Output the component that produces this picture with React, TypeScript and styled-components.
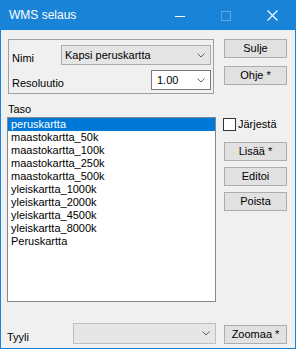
import * as React from 'react';
import styled, { createGlobalStyle } from 'styled-components';

const GlobalStyle = createGlobalStyle`
  html, body {
    margin: 0;
    padding: 0;
    background: #ffffff;
  }
  * {
    box-sizing: border-box;
  }
`;

const Window = styled.div`
  width: 296px;
  height: 349px;
  display: flex;
  flex-direction: column;
  background: #f0f0f0;
  border: 1px solid #1883d7;
  font-family: "Liberation Sans", Arial, sans-serif;
  font-size: 11px;
  color: #000;
`;

const TitleBar = styled.div`
  height: 29px;
  display: flex;
  align-items: center;
  background: #1883d7;
  color: #fff;
`;

const Title = styled.div`
  flex: 1;
  padding-left: 8px;
  font-size: 12px;
  padding-bottom: 1px;
`;

const CaptionButton = styled.div`
  width: 46px;
  height: 29px;
  display: flex;
  align-items: center;
  justify-content: center;
`;

const Body = styled.div`
  flex: 1;
  display: grid;
  grid-template-columns: 209px 63px;
  grid-template-rows: 55px 23px 185px 1fr;
  column-gap: 8px;
  padding: 9px 8px 0 6px;
`;

const Group = styled.div`
  margin-left: 1px;
  width: 206px;
  border: 1px solid #a0a0a0;
  display: flex;
  flex-direction: column;
  gap: 5px;
  padding: 5px 2px 0 3px;
`;

const FieldRow = styled.div`
  display: flex;
  justify-content: space-between;
  align-items: flex-start;
`;

const FieldLabel = styled.span<{ $drop?: number }>`
  padding-top: ${(p) => p.$drop ?? 5}px;
  line-height: 13px;
`;

const Combo = styled.div<{ $width: number; $editable?: boolean; $disabled?: boolean; $height?: number }>`
  width: ${(p) => p.$width}px;
  height: ${(p) => p.$height ?? 20}px;
  display: flex;
  align-items: center;
  justify-content: space-between;
  padding: 0 5px 0 ${(p) => (p.$editable ? 5 : 3)}px;
  background: ${(p) => (p.$editable ? '#ffffff' : p.$disabled ? '#e6e6e6' : '#e5e5e5')};
  border: 1px solid ${(p) => (p.$editable ? '#7a7a7a' : p.$disabled ? '#bfbfbf' : '#acacac')};
  line-height: 13px;
`;

const ButtonColumn = styled.div<{ $gap: number }>`
  display: flex;
  flex-direction: column;
  gap: ${(p) => p.$gap}px;
`;

const Button = styled.div`
  width: 63px;
  height: 19px;
  display: flex;
  align-items: center;
  justify-content: center;
  background: #e1e1e1;
  border: 1px solid #adadad;
  line-height: 13px;
`;

const SectionLabel = styled.div`
  grid-column: 1 / span 2;
  padding: 9px 0 0 1px;
  line-height: 13px;
`;

const ListBox = styled.div`
  background: #fff;
  border: 1px solid #828790;
  display: flex;
  flex-direction: column;
  overflow: hidden;
`;

const ListItem = styled.div<{ $selected?: boolean }>`
  height: 13px;
  line-height: 13px;
  padding-left: 3px;
  white-space: nowrap;
  background: ${(p) => (p.$selected ? '#0078d7' : 'transparent')};
  color: ${(p) => (p.$selected ? '#fff' : '#000')};
`;

const CheckRow = styled.label`
  display: flex;
  align-items: center;
  gap: 2px;
  height: 13px;
  margin: 1px 0 5px -1px;
  line-height: 13px;
`;

const CheckBox = styled.span`
  width: 13px;
  height: 13px;
  background: #fff;
  border: 1px solid #333;
`;

const BottomRow = styled.div`
  display: flex;
  align-items: flex-start;
  justify-content: space-between;
  padding-top: 21px;
`;

const BottomRight = styled.div`
  padding-top: 23px;
`;

const Chevron = () => (
  <svg width="8" height="5" viewBox="0 0 8 5">
    <polyline points="0.5,0.5 4,4 7.5,0.5" fill="none" stroke="#606060" strokeWidth="1" />
  </svg>
);

const items = [
  'peruskartta',
  'maastokartta_50k',
  'maastokartta_100k',
  'maastokartta_250k',
  'maastokartta_500k',
  'yleiskartta_1000k',
  'yleiskartta_2000k',
  'yleiskartta_4500k',
  'yleiskartta_8000k',
  'Peruskartta',
];

export default function App() {
  return (
    <>
      <GlobalStyle />
      <Window>
        <TitleBar>
          <Title>WMS selaus</Title>
          <CaptionButton>
            <svg width="10" height="10" viewBox="0 0 10 10">
              <line x1="0" y1="5.5" x2="10" y2="5.5" stroke="#fff" strokeWidth="1" />
            </svg>
          </CaptionButton>
          <CaptionButton>
            <svg width="10" height="10" viewBox="0 0 10 10">
              <rect x="0.5" y="0.5" width="9" height="9" fill="none" stroke="#5fa8e6" strokeWidth="1" />
            </svg>
          </CaptionButton>
          <CaptionButton>
            <svg width="11" height="11" viewBox="0 0 11 11">
              <path d="M0.5 0.5 L10.5 10.5 M10.5 0.5 L0.5 10.5" stroke="#fff" strokeWidth="1.1" />
            </svg>
          </CaptionButton>
        </TitleBar>
        <Body>
          <Group>
            <FieldRow>
              <FieldLabel $drop={7}>Nimi</FieldLabel>
              <Combo $width={150}>
                <span>Kapsi peruskartta</span>
                <Chevron />
              </Combo>
            </FieldRow>
            <FieldRow>
              <FieldLabel $drop={7}>Resoluutio</FieldLabel>
              <Combo $width={60} $editable>
                <span>1.00</span>
                <Chevron />
              </Combo>
            </FieldRow>
          </Group>
          <ButtonColumn $gap={8}>
            <Button>Sulje</Button>
            <Button>Ohje *</Button>
          </ButtonColumn>

          <SectionLabel>Taso</SectionLabel>

          <ListBox>
            {items.map((it, i) => (
              <ListItem key={i} $selected={i === 0}>
                {it}
              </ListItem>
            ))}
          </ListBox>
          <ButtonColumn $gap={6}>
            <CheckRow>
              <CheckBox />
              <span>Järjestä</span>
            </CheckRow>
            <Button>Lisää *</Button>
            <Button>Editoi</Button>
            <Button>Poista</Button>
          </ButtonColumn>

          <BottomRow>
            <FieldLabel $drop={8}>Tyyli</FieldLabel>
            <Combo $width={143} $height={21} $disabled>
              <span />
              <Chevron />
            </Combo>
          </BottomRow>
          <BottomRight>
            <Button>Zoomaa *</Button>
          </BottomRight>
        </Body>
      </Window>
    </>
  );
}
